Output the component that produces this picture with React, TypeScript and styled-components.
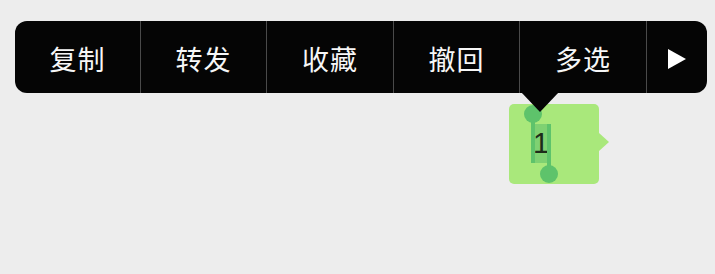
import React from "react";
import styled, { createGlobalStyle } from "styled-components";

const Global = createGlobalStyle`
  html, body {
    margin: 0;
    padding: 0;
    background: #ededed;
  }
  body {
    font-family: "Noto Sans CJK SC", "Noto Sans", sans-serif;
  }
`;

const Page = styled.div`
  position: relative;
  width: 715px;
  height: 274px;
  overflow: hidden;
  background: #ededed;
  box-sizing: border-box;
  padding: 104px 116px 0 0;
  display: flex;
  flex-direction: column;
  align-items: flex-end;
`;

const Menu = styled.div`
  position: absolute;
  left: 15px;
  top: 21px;
  width: 692px;
  height: 72px;
  background: #050505;
  border-radius: 12px;
  display: grid;
  grid-template-columns: 126px 126px 127px 126px 127px 1fr;
  z-index: 2;
`;

const MenuItem = styled.div<{ $last?: boolean }>`
  display: flex;
  align-items: center;
  justify-content: center;
  box-sizing: border-box;
  border-right: ${(p) => (p.$last ? "none" : "1px solid #4a4a4a")};
  color: #f7f7f7;
  font-size: 27px;
  font-weight: 400;
  letter-spacing: 1px;
  padding-top: 3px;
`;

const Arrow = styled.div`
  position: absolute;
  left: 521px;
  top: 92px;
  width: 0;
  height: 0;
  border-left: 19px solid transparent;
  border-right: 19px solid transparent;
  border-top: 20px solid #050505;
  z-index: 3;
`;

const Bubble = styled.div`
  position: relative;
  width: 90px;
  height: 80px;
  box-sizing: border-box;
  padding: 20px 0 0 22px;
  background: #a9e87b;
  border-radius: 5px;

  &::after {
    content: "";
    position: absolute;
    right: -10px;
    top: 29px;
    width: 0;
    height: 0;
    border-top: 9px solid transparent;
    border-bottom: 9px solid transparent;
    border-left: 10px solid #a9e87b;
  }
`;

const Selected = styled.span`
  position: relative;
  display: flex;
  align-items: center;
  justify-content: center;
  width: 20px;
  height: 39px;
  background: #7fd172;
  color: #1d2b1a;
  font-family: "Liberation Sans", "Noto Sans", sans-serif;
  font-size: 29px;
  line-height: 39px;
`;

const Bar = styled.span<{ $side: "left" | "right" }>`
  position: absolute;
  width: 4px;
  background: #5ec36b;
  ${(p) =>
    p.$side === "left"
      ? "left: 0; top: -10px; bottom: 0;"
      : "right: 0; top: 0; bottom: -10px;"}
`;

const Knob = styled.span<{ $side: "left" | "right" }>`
  position: absolute;
  width: 18px;
  height: 18px;
  border-radius: 50%;
  background: #5ec36b;
  ${(p) =>
    p.$side === "left"
      ? "left: -7px; top: -19px;"
      : "right: -7px; bottom: -20px;"}
`;

const PlayIcon = () => (
  <svg width="20" height="22" viewBox="0 0 20 22">
    <path d="M1 1 L19 11 L1 21 Z" fill="#ffffff" />
  </svg>
);

const items = ["复制", "转发", "收藏", "撤回", "多选"];

export default function App() {
  return (
    <>
      <Global />
      <Page>
        <Menu>
          {items.map((t) => (
            <MenuItem key={t}>{t}</MenuItem>
          ))}
          <MenuItem $last>
            <PlayIcon />
          </MenuItem>
        </Menu>
        <Arrow />
        <Bubble>
          <Selected>
            1
            <Bar $side="left" />
            <Bar $side="right" />
            <Knob $side="left" />
            <Knob $side="right" />
          </Selected>
        </Bubble>
      </Page>
    </>
  );
}
